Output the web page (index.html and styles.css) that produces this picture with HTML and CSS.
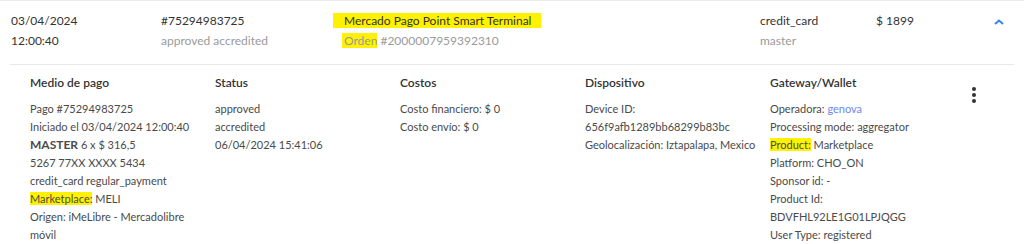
FILE: index.html
```html
<!DOCTYPE html>
<html lang="es">
<head>
    <meta charset="UTF-8">
    <meta name="viewport" content="width=device-width, initial-scale=1.0">
    <title>Pago 75294983725</title>
    <link rel="stylesheet" href="styles.css">
</head>
<body>
    <div class="payment-row">
        <div class="summary">
            <div class="cell cell-date">
                <p>03/04/2024</p>
                <p>12:00:40</p>
            </div>
            <div class="cell cell-id">
                <p>#75294983725</p>
                <p class="muted">approved accredited</p>
            </div>
            <div class="cell cell-desc">
                <p><span class="mark mark-wide">Mercado Pago Point Smart Terminal</span></p>
                <p class="muted"><span class="mark mark-short">Orden</span> #2000007959392310</p>
            </div>
            <div class="cell cell-method">
                <p>credit_card</p>
                <p class="muted">master</p>
            </div>
            <div class="cell cell-amount">
                <p>$ 1899</p>
            </div>
            <div class="cell cell-toggle">
                <svg class="chevron" width="10" height="6" viewBox="0 0 10 6">
                    <path d="M1 5 L5 1.5 L9 5" fill="none" stroke="#3483fa" stroke-width="2"/>
                </svg>
            </div>
        </div>

        <div class="details">
            <div class="col col-payment">
                <h3>Medio de pago</h3>
                <p>Pago #75294983725</p>
                <p>Iniciado el 03/04/2024 12:00:40</p>
                <p><strong>MASTER</strong> 6 x $ 316,5</p>
                <p>5267 77XX XXXX 5434</p>
                <p>credit_card regular_payment</p>
                <p><span class="mark">Marketplace:</span> MELI</p>
                <p>Origen: iMeLibre - Mercadolibre móvil</p>
            </div>
            <div class="col">
                <h3>Status</h3>
                <p>approved</p>
                <p>accredited</p>
                <p>06/04/2024 15:41:06</p>
            </div>
            <div class="col">
                <h3>Costos</h3>
                <p>Costo financiero: $ 0</p>
                <p>Costo envío: $ 0</p>
            </div>
            <div class="col">
                <h3>Dispositivo</h3>
                <p>Device ID:</p>
                <p>656f9afb1289bb68299b83bc</p>
                <p>Geolocalización: Iztapalapa, Mexico</p>
            </div>
            <div class="col col-gateway">
                <h3>Gateway/Wallet</h3>
                <p>Operadora: <a href="#" class="link">genova</a></p>
                <p>Processing mode: aggregator</p>
                <p><span class="mark">Product:</span> Marketplace</p>
                <p>Platform: CHO_ON</p>
                <p>Sponsor id: -</p>
                <p>Product Id:</p>
                <p>BDVFHL92LE1G01LPJQGG</p>
                <p>User Type: registered</p>
            </div>
            <div class="col-menu">
                <svg width="4" height="16" viewBox="0 0 4 16">
                    <circle cx="2" cy="2" r="2" fill="#333"/>
                    <circle cx="2" cy="8" r="2" fill="#333"/>
                    <circle cx="2" cy="14" r="2" fill="#333"/>
                </svg>
            </div>
        </div>
    </div>
</body>
</html>
```

FILE: styles.css
```css
body {
    margin: 0;
    background-color: #fff;
    font-family: Lato, "Open Sans", sans-serif;
    color: #333;
}
p {
    margin: 0;
}
.payment-row {
    border-top: 1px solid #ececec;
}
.summary {
    display: flex;
    padding: 10px 0 0 11px;
    height: 53px;
    font-size: 12px;
    line-height: 20px;
}
.cell-date {
    width: 150px;
}
.cell-id {
    width: 183px;
}
.cell-desc {
    width: 416px;
}
.cell-method {
    width: 116px;
}
.cell-amount {
    width: 118px;
}
.cell-toggle {
    padding-top: 8px;
}
.chevron {
    display: block;
}
.muted {
    color: #9a9a9a;
}
.mark {
    background-color: #fff200;
}
.mark-wide {
    margin-left: -11px;
    padding: 0 10px 0 11px;
    color: #333;
}
.mark-short {
    margin-left: -2px;
    padding: 0 0 0 2px;
}
.details {
    margin: 0 10px;
    border-top: 1px solid #e8e8e8;
    padding: 9px 0 0 20px;
    display: flex;
    font-size: 11px;
    line-height: 18px;
    color: #4a4a4a;
}
.col {
    width: 185px;
}
.col-payment {
    width: 165px;
    padding-right: 20px;
}
.col-gateway {
    width: 202px;
}
.col h3 {
    margin: 0 0 8px;
    font-size: 12px;
    line-height: 18px;
    font-weight: 600;
    color: #333;
}
.col strong {
    font-weight: 700;
    font-size: 12px;
}
.link {
    color: #6f86ee;
    text-decoration: none;
}
.col-menu {
    padding: 13px 0 0 0;
}
```
